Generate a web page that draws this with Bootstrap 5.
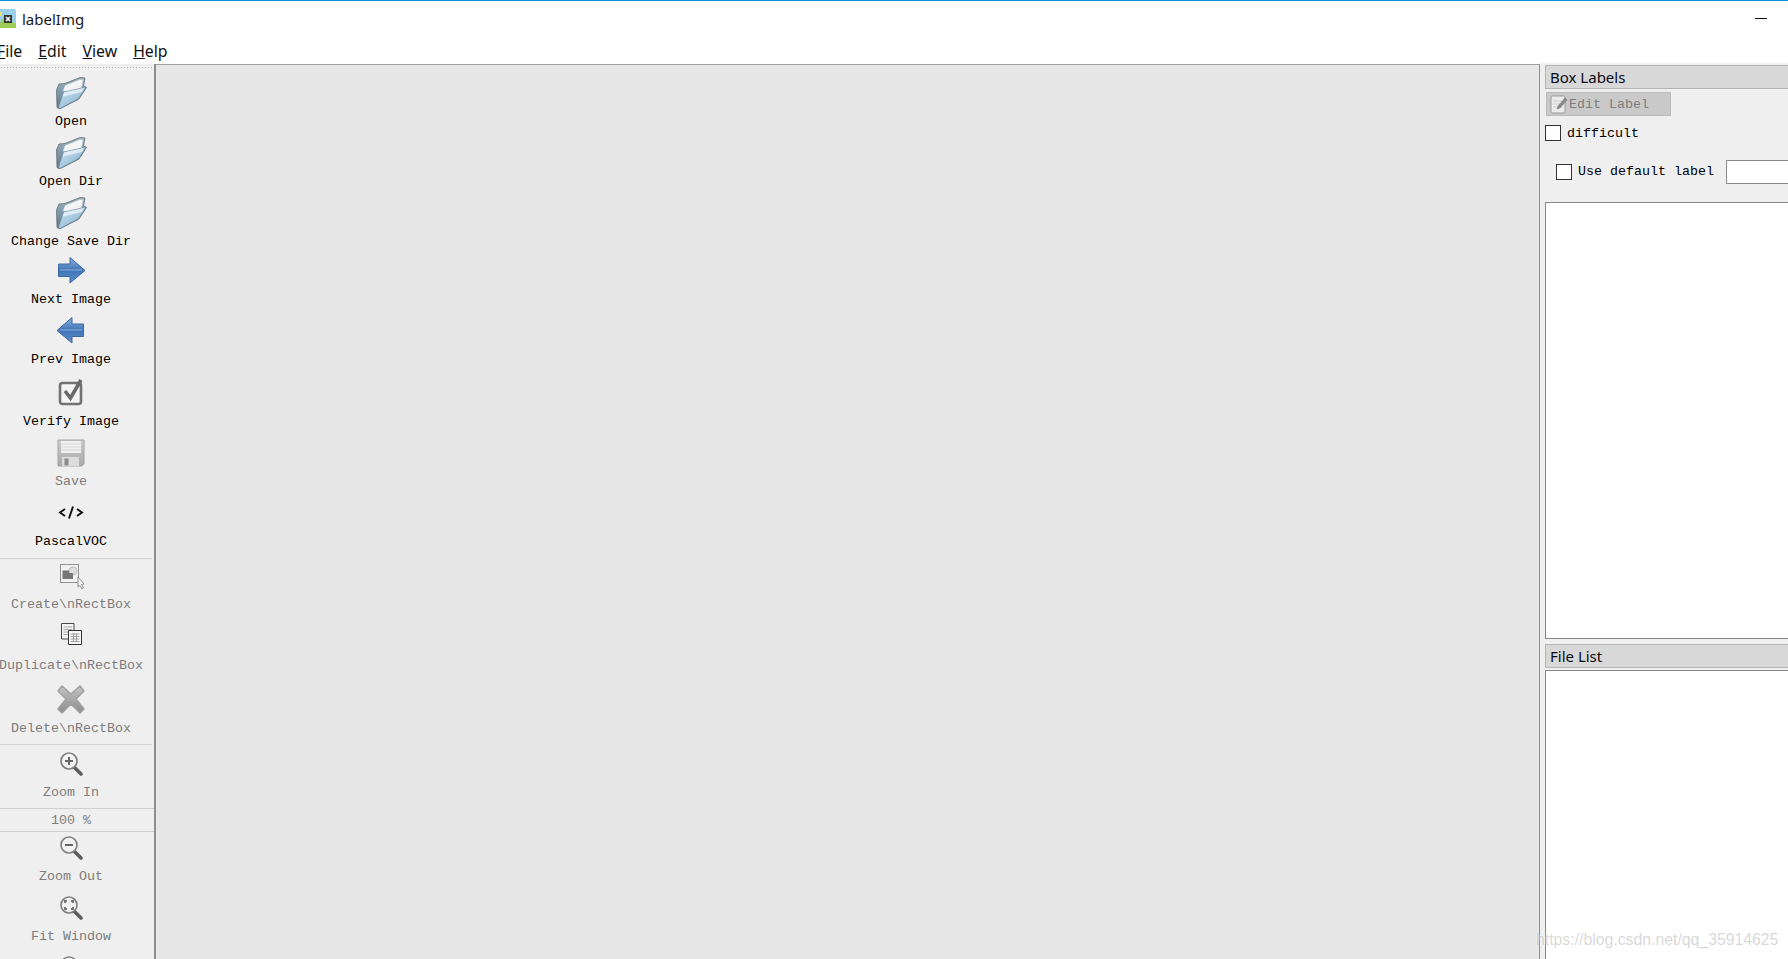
<!DOCTYPE html>
<html lang="en">

<head>
    <meta charset="UTF-8" />
    <meta name="viewport" content="width=device-width, initial-scale=1.0" />
    <title>labelImg</title>
    <link href="https://cdn.jsdelivr.net/npm/bootstrap@5.3.3/dist/css/bootstrap.min.css" rel="stylesheet" />
    <style>
        html, body { height: 100%; overflow: hidden; }
        body { background: #fff; color: #000; font-family: "Noto Sans", sans-serif; font-size: 15px; }
        .svg-defs { width: 0; height: 0; display: block; }
        .app-shell { height: 959px; }
        .title-bar { height: 32px; border-top: 1px solid #0f8ae2; padding-top: 8px; line-height: 20px; flex: none; }
        .title-icon { width: 19px; height: 19px; margin-left: -3px; margin-right: 6px; }
        .title-text { font-size: 15px; color: #1a1a1a; }
        .min-btn { width: 12px; height: 1px; background: #000; margin: 9px 21px 0 0; }
        .menu-bar { height: 31px; padding-top: 7px; line-height: 24px; flex: none; color: #111; font-size: 15.8px; }
        .menu-bar span { margin-right: 16px; }
        .menu-bar span:first-child { margin-left: -3px; }
        .main-area { min-height: 0; }

        .tool-bar { width: 156px; flex: none; background: #efefef; border-right: 2px solid #8e8e8e; margin-top: 1px; font-family: "Liberation Mono", monospace; font-size: 13.33px; line-height: 16px; color: #000; }
        .tool-grip { height: 3px; margin: 2px 2px 8px 0; flex: none; background-image: radial-gradient(#b9b9b9 1px, transparent 1px); background-size: 3px 3px; }
        .tool-btn { display: flex; flex-direction: column; align-items: center; margin-top: 7px; width: 142px; white-space: nowrap; flex: none; }
        .tool-btn svg { width: 32px; height: 32px; flex: none; display: block; }
        .tool-btn span { margin-top: 5px; }
        .tool-off { color: #7d7d7d; }
        .tool-first { margin-top: 0; }
        .tool-tight { margin-top: 1px; }
        .zoom-in-btn { margin-top: 3px; }
        .gap-5px { margin-top: 5px; }
        .gap-7px { margin-top: 7px; }
        .gap-8px { margin-top: 8px; }
        .gap-9px { margin-top: 9px; }
        .gap-10px { margin-top: 10px; }
        .tool-sep { height: 1px; background: #d2d2d2; width: 152px; flex: none; margin-top: 8px; }
        .tool-sep-close { margin-top: 7px; }
        .zoom-line { height: 22px; line-height: 24px; text-align: center; width: 142px; color: #7d7d7d; flex: none; }
        .zoom-rule { height: 1px; background: #cfcfcf; width: 154px; flex: none; }

        .canvas-pane { background: #e7e7e7; border-right: 1px solid #8e8e8e; margin-top: 1px; border-top: 1px solid #a0a0a0; }

        .side-pane { width: 248px; flex: none; background: #efefef; padding: 2px 0 0 5px; }
        .dock-title { height: 24px; line-height: 23px; background: #d8d8d8; border: 1px solid #b4b4b4; border-right: 0; padding-left: 4px; font-size: 15px; color: #0a0a14; flex: none; }
        .edit-btn { width: 125px; height: 24px; margin: 3px 0 0 1px; background: #c9c9c9; border: 1px solid #bcbcbc; font-family: "Liberation Mono", monospace; font-size: 13.33px; line-height: 22px; color: #7d7d7d; }
        .edit-btn svg { width: 18px; height: 19px; margin: 0 1px 0 3px; flex: none; }
        .edit-btn span { padding-top: 1px; }
        .tick-row { font-family: "Liberation Mono", monospace; font-size: 13.33px; line-height: 16px; color: #000; white-space: nowrap; }
        .form-check-input.tick-box { width: 16px; height: 16px; margin: 0 6px 0 0; border: 1px solid #333; border-radius: 0; background: #fff; flex: none; }
        .difficult-row { margin-top: 9px; height: 16px; }
        .difficult-row span { padding-top: 1px; margin-bottom: -1px; }
        .default-row { margin-top: 19px; padding-left: 11px; }
        .default-input { width: 100px; height: 24px; min-height: 0; margin-left: 12px; border: 1px solid #8a8a8a; background: #fff; flex: none; border-radius: 0; padding: 0; }
        .list-view { background: #fff; border: 1px solid #858590; border-right: 0; }
        .box-list { height: 437px; margin-top: 18px; flex: none; }
        .file-title { margin-top: 5px; }
        .file-list { margin-top: 2px; flex: 1 1 auto; border-bottom: 0; }
        .water-mark { position: absolute; left: 1536px; top: 930px; font-family: "Liberation Sans", sans-serif; font-size: 15.8px; line-height: 20px; color: rgba(150, 150, 150, .38); text-shadow: 0 0 2px rgba(255, 255, 255, .8); white-space: nowrap; }
    </style>
</head>

<body>

    <svg class="svg-defs" aria-hidden="true">
        <defs>
            <linearGradient id="gFolder" x1="0" y1="0" x2="1" y2="1">
                <stop offset="0" stop-color="#cfe4f1" />
                <stop offset="1" stop-color="#7fb0cf" />
            </linearGradient>
            <linearGradient id="gBack" x1="0" y1="0" x2="0" y2="1">
                <stop offset="0" stop-color="#9fb6c4" />
                <stop offset="1" stop-color="#5d7482" />
            </linearGradient>
            <linearGradient id="gArrow" x1="0" y1="0" x2="0" y2="1">
                <stop offset="0" stop-color="#8fb2dc" />
                <stop offset=".5" stop-color="#3f74b8" />
                <stop offset="1" stop-color="#5e8dc6" />
            </linearGradient>
            <linearGradient id="gFloppy" x1="0" y1="0" x2="0" y2="1">
                <stop offset="0" stop-color="#cdcdcd" />
                <stop offset="1" stop-color="#a9a9a9" />
            </linearGradient>
            <linearGradient id="gCross" x1="0" y1="0" x2="0" y2="1">
                <stop offset="0" stop-color="#c4c4c4" />
                <stop offset="1" stop-color="#8c8c8c" />
            </linearGradient>
            <symbol id="iconFolder" viewBox="0 0 32 32">
                <path d="M1.500 13 4 7 10 6.500 25 .5 30 1 28.500 9 31.500 10.500 24 22 4.500 32 2 30.500Z" fill="url(#gBack)" stroke="#5f6f7a" stroke-width=".8" />
                <path d="M8 14 10 8.500 25 2.500 28 3 26.500 11 14 15Z" fill="#f4f6f6" stroke="#c4cbd0" stroke-width=".5" />
                <path d="M3.500 30.500 8.500 15 31 10 23.500 21.500 5 31.500Z" fill="url(#gFolder)" stroke="#6d8b9f" stroke-width=".6" />
                <path d="M9 15.500 29 11 27 15 8 19.500Z" fill="#eaf2f7" opacity=".8" />
            </symbol>
            <symbol id="iconNext" viewBox="0 0 32 32">
                <path d="M3.500 9H15V2.500L30 15.500 15 28V21.500H3.500Z" fill="url(#gArrow)" stroke="#3c6aa5" />
                <path d="M5 15H27" stroke="#a9c6e8" stroke-width="1.200" opacity=".6" />
            </symbol>
            <symbol id="iconPrev" viewBox="0 0 32 32">
                <path d="M28.500 9H17V2.500L2 15.500 17 28V21.500H28.500Z" fill="url(#gArrow)" stroke="#3c6aa5" />
                <path d="M27 15H5" stroke="#a9c6e8" stroke-width="1.200" opacity=".6" />
            </symbol>
            <symbol id="iconVerify" viewBox="0 0 32 32">
                <rect x="5" y="6" width="21" height="21" rx="2.500" fill="#f4f4f4" stroke="#727272" stroke-width="2.600" />
                <path d="M10 14 15.500 21 26 3" fill="none" stroke="#6a6a6a" stroke-width="3.600" />
            </symbol>
            <symbol id="iconSave" viewBox="0 0 32 32">
                <path d="M3 3H29V27L26.500 29H3Z" fill="url(#gFloppy)" stroke="#a3a3a3" />
                <rect x="6" y="4" width="20" height="12" fill="#f0f0f0" />
                <path d="M6 7H26M6 10H26M6 13H26" stroke="#d8d8d8" />
                <rect x="7" y="20" width="17" height="9" fill="#dcdcdc" />
                <rect x="9.500" y="21.500" width="4" height="7" fill="#8a8a8a" />
            </symbol>
            <symbol id="iconXml" viewBox="0 0 32 32">
                <path d="M10 12 5 15.500 10 19M22 12 27 15.500 22 19M18 9.500 14 21.500" fill="none" stroke="#111" stroke-width="1.900" />
            </symbol>
            <symbol id="iconCreate" viewBox="0 -4 32 32">
                <rect x="5.500" y=".5" width="18" height="18" fill="#f1f1f1" stroke="#333" stroke-dasharray="1 1" />
                <circle cx="18" cy="7" r="4" fill="#dedede" stroke="#bbb" />
                <path d="M7.500 6.500H14V9H18V15H7.500Z" fill="#777" />
                <path d="M23 13V23L25 21.500 27 25 28.500 24 26.500 20.500 29 20Z" fill="#f6f6f6" stroke="#777" stroke-width=".8" />
            </symbol>
            <symbol id="iconCopy" viewBox="0 0 32 32">
                <path d="M6.500 2.500H19V18H6.500Z" fill="#f4f4f4" stroke="#4a4a4a" />
                <path d="M8.500 6H17M8.500 8.500H17M8.500 11H17M8.500 13.500H17" stroke="#aaa" />
                <path d="M13.500 9.500H26.500V23.500H13.500Z" fill="#f8f8f8" stroke="#333" />
                <path d="M15.500 13H24.500M15.500 15.500H24.500M15.500 18H24.500M15.500 20.500H24.500M18.500 12V21M21.500 12V21" stroke="#a0a0a0" />
            </symbol>
            <symbol id="iconDelete" viewBox="0 0 32 32">
                <path d="M3 7 7 2 16 10 25 2 29 7 21 15 29 25 25 29 16 20 7 29 3 25 11 15Z" fill="url(#gCross)" stroke="#a0a0a0" stroke-linejoin="round" stroke-width="1.500" />
            </symbol>
            <symbol id="iconLens" viewBox="0 0 32 32">
                <path d="M19 19 26 26" stroke="#5e5e5e" stroke-width="3.600" stroke-linecap="round" />
                <circle cx="14" cy="13" r="8" fill="#f2f2f2" stroke="#808080" stroke-width="1.700" />
            </symbol>
        </defs>
    </svg>

    <div class="app-shell d-flex flex-column">

        <!-- Title bar -->
        <div class="title-bar d-flex">
            <svg class="title-icon" viewBox="0 0 19 19">
                <rect width="19" height="19" rx="2" fill="#9ccfe9" />
                <path d="M0 18 7 8 19 15V19H0Z" fill="#9ccc55" />
                <circle cx="3" cy="5" r="2" fill="#f4e36a" />
                <rect x="7" y="6" width="8" height="8" fill="#333" />
                <path d="M9 8 13 12M13 8 9 12" stroke="#fff" stroke-width="1.600" />
            </svg>
            <div class="title-text flex-grow-1">labelImg</div>
            <div class="min-btn"></div>
        </div>

        <!-- Menu -->
        <div class="menu-bar d-flex">
            <span><u>F</u>ile</span>
            <span><u>E</u>dit</span>
            <span><u>V</u>iew</span>
            <span><u>H</u>elp</span>
        </div>

        <div class="main-area d-flex flex-grow-1">

            <!-- Toolbar -->
            <div class="tool-bar d-flex flex-column overflow-hidden">
                <div class="tool-grip"></div>
                <div class="tool-btn tool-first"><svg><use href="#iconFolder" /></svg><span>Open</span></div>
                <div class="tool-btn"><svg><use href="#iconFolder" /></svg><span>Open Dir</span></div>
                <div class="tool-btn"><svg><use href="#iconFolder" /></svg><span>Change Save Dir</span></div>
                <div class="tool-btn gap-5px"><svg><use href="#iconNext" /></svg><span>Next Image</span></div>
                <div class="tool-btn"><svg><use href="#iconPrev" /></svg><span>Prev Image</span></div>
                <div class="tool-btn gap-9px"><svg><use href="#iconVerify" /></svg><span>Verify Image</span></div>
                <div class="tool-btn tool-off"><svg><use href="#iconSave" /></svg><span>Save</span></div>
                <div class="tool-btn"><svg><use href="#iconXml" /></svg><span>PascalVOC</span></div>
                <div class="tool-sep"></div>
                <div class="tool-btn tool-off tool-tight"><svg><use href="#iconCreate" /></svg><span>Create\nRectBox</span></div>
                <div class="tool-btn tool-off gap-8px"><svg><use href="#iconCopy" /></svg><span>Duplicate\nRectBox</span></div>
                <div class="tool-btn tool-off gap-10px"><svg><use href="#iconDelete" /></svg><span>Delete\nRectBox</span></div>
                <div class="tool-sep tool-sep-close"></div>
                <div class="tool-btn tool-off zoom-in-btn">
                    <svg viewBox="0 0 32 32"><use href="#iconLens" /><path d="M10 13H18M14 9V17" stroke="#666" stroke-width="2" /></svg>
                    <span>Zoom In</span>
                </div>
                <div class="zoom-rule gap-7px"></div>
                <div class="zoom-line">100 %</div>
                <div class="zoom-rule"></div>
                <div class="tool-btn tool-off tool-first">
                    <svg viewBox="0 0 32 32"><use href="#iconLens" /><path d="M10 13H18" stroke="#666" stroke-width="2" /></svg>
                    <span>Zoom Out</span>
                </div>
                <div class="tool-btn tool-off">
                    <svg viewBox="0 0 32 32"><use href="#iconLens" /><path d="M10 11V9H12M16 9H18V11M18 15V17H16M12 17H10V15" fill="none" stroke="#777" stroke-width="2" /></svg>
                    <span>Fit Window</span>
                </div>
                <div class="tool-btn tool-off">
                    <svg viewBox="0 0 32 32"><use href="#iconLens" /></svg>
                </div>
            </div>

            <!-- Canvas -->
            <div class="canvas-pane flex-grow-1"></div>

            <!-- Right docks -->
            <div class="side-pane d-flex flex-column">
                <div class="dock-title">Box Labels</div>
                <div class="edit-btn d-flex align-items-center">
                    <svg viewBox="0 0 18 19">
                        <rect x="1" y="1" width="14" height="17" rx="1.500" fill="#ececec" stroke="#9a9a9a" />
                        <path d="M3 6H13M3 9H13M3 12H13" stroke="#d0d0d0" />
                        <path d="M7 14 8 11 15 3 17 5 10 13Z" fill="#8a8a8a" stroke="#6e6e6e" stroke-width=".5" />
                    </svg>
                    <span>Edit Label</span>
                </div>
                <div class="tick-row difficult-row d-flex align-items-center">
                    <input class="form-check-input tick-box" type="checkbox" />
                    <span>difficult</span>
                </div>
                <div class="tick-row default-row d-flex align-items-center">
                    <input class="form-check-input tick-box" type="checkbox" />
                    <span>Use default label</span>
                    <input class="form-control default-input" type="text" />
                </div>
                <div class="list-view box-list"></div>
                <div class="dock-title file-title">File List</div>
                <div class="list-view file-list"></div>
            </div>
        </div>
    </div>

    <div class="water-mark">https://blog.csdn.net/qq_35914625</div>

    <script src="https://cdn.jsdelivr.net/npm/bootstrap@5.3.3/dist/js/bootstrap.bundle.min.js"></script>
</body>

</html>
